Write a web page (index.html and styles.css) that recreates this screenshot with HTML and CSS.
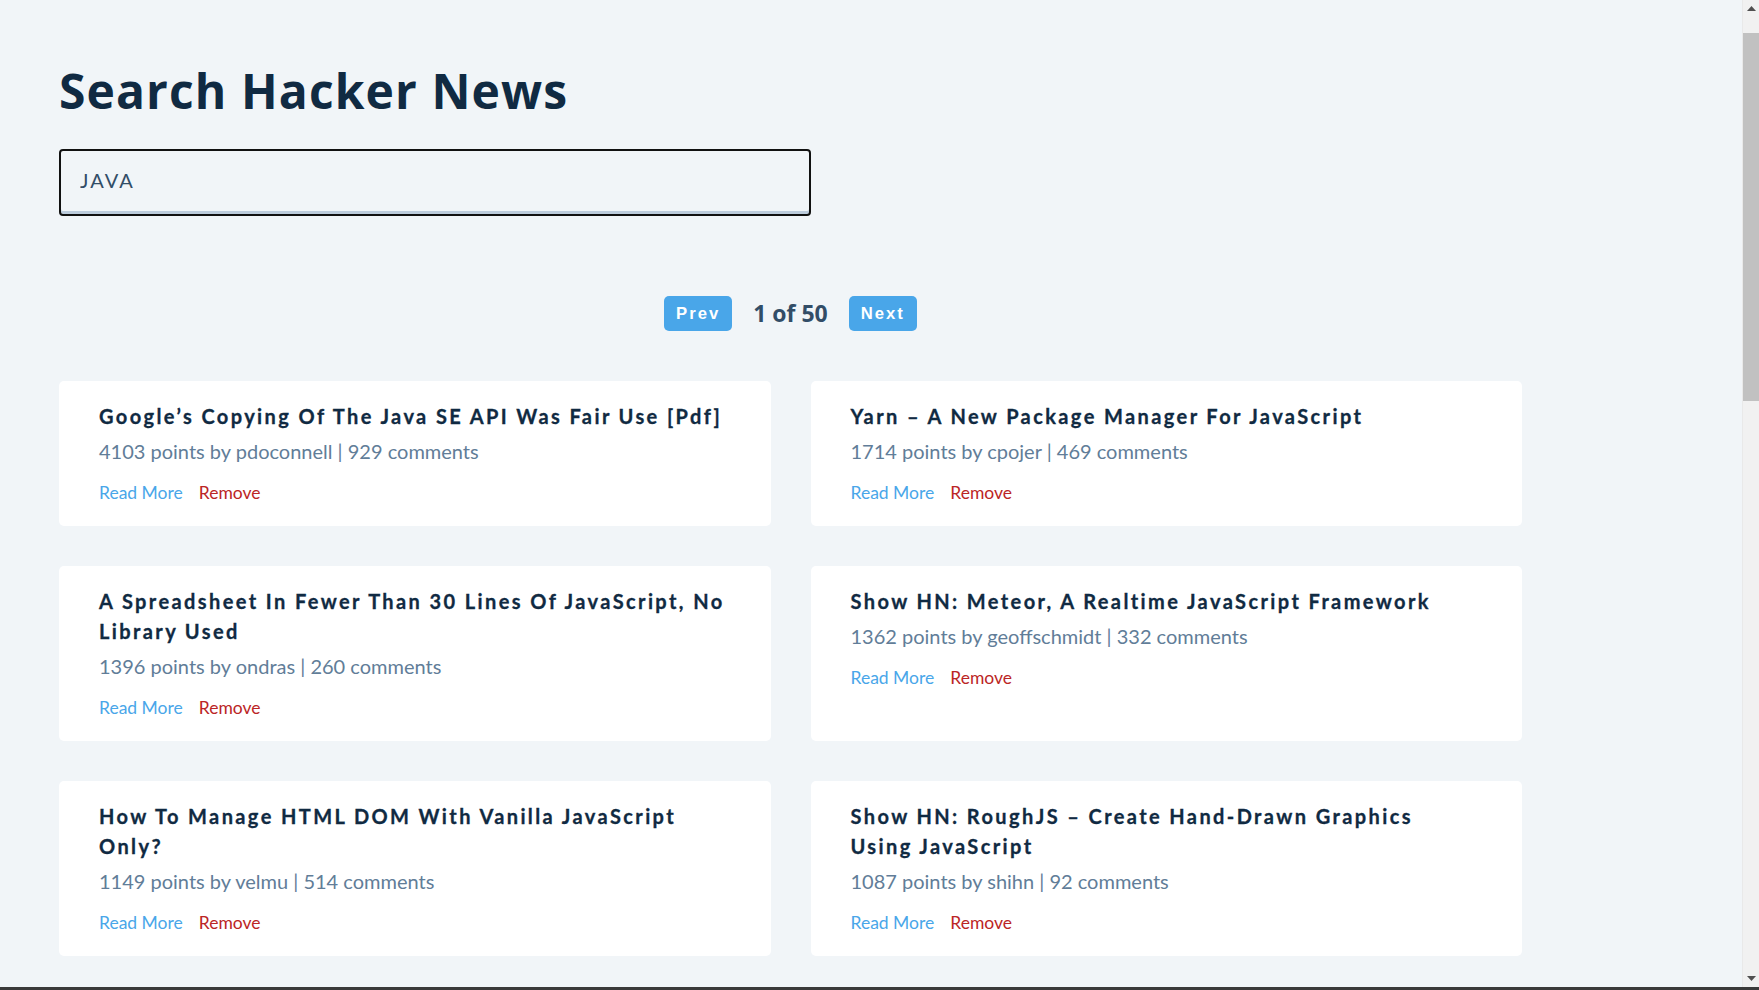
FILE: index.html
```html
<!DOCTYPE html>
<html lang="en">
<head>
<meta charset="utf-8">
<title>Search Hacker News</title>
<link rel="stylesheet" href="styles.css">
</head>
<body>
<div class="window">
<div class="viewport">
<main class="page">
  <form class="search-form">
    <h2 class="heading">Search Hacker News</h2>
    <input class="form-input" type="text" value="JAVA" autofocus>
  </form>

  <div class="btn-container">
    <button class="page-btn" type="button">Prev</button>
    <p class="page-count">1 of 50</p>
    <button class="page-btn" type="button">Next</button>
  </div>

  <section class="stories">
    <article class="story">
      <h4 class="title">Google’s Copying Of The Java SE API Was Fair Use [Pdf]</h4>
      <p class="info">4103 points by pdoconnell | 929 comments</p>
      <div class="actions"><a class="read-link" href="#">Read More</a><button class="remove-btn" type="button">Remove</button></div>
    </article>
    <article class="story">
      <h4 class="title">Yarn – A New Package Manager For JavaScript</h4>
      <p class="info">1714 points by cpojer | 469 comments</p>
      <div class="actions"><a class="read-link" href="#">Read More</a><button class="remove-btn" type="button">Remove</button></div>
    </article>
    <article class="story">
      <h4 class="title">A Spreadsheet In Fewer Than 30 Lines Of JavaScript, No Library Used</h4>
      <p class="info">1396 points by ondras | 260 comments</p>
      <div class="actions"><a class="read-link" href="#">Read More</a><button class="remove-btn" type="button">Remove</button></div>
    </article>
    <article class="story">
      <h4 class="title">Show HN: Meteor, A Realtime JavaScript Framework</h4>
      <p class="info">1362 points by geoffschmidt | 332 comments</p>
      <div class="actions"><a class="read-link" href="#">Read More</a><button class="remove-btn" type="button">Remove</button></div>
    </article>
    <article class="story">
      <h4 class="title">How To Manage HTML DOM With Vanilla JavaScript Only?</h4>
      <p class="info">1149 points by velmu | 514 comments</p>
      <div class="actions"><a class="read-link" href="#">Read More</a><button class="remove-btn" type="button">Remove</button></div>
    </article>
    <article class="story">
      <h4 class="title">Show HN: RoughJS – Create Hand-Drawn Graphics Using JavaScript</h4>
      <p class="info">1087 points by shihn | 92 comments</p>
      <div class="actions"><a class="read-link" href="#">Read More</a><button class="remove-btn" type="button">Remove</button></div>
    </article>
    <article class="story">
      <h4 class="title">The Deep Roots Of JavaScript Fatigue</h4>
      <p class="info">1052 points by ingve | 601 comments</p>
      <div class="actions"><a class="read-link" href="#">Read More</a><button class="remove-btn" type="button">Remove</button></div>
    </article>
    <article class="story">
      <h4 class="title">Java Is Still Free</h4>
      <p class="info">1011 points by tosh | 484 comments</p>
      <div class="actions"><a class="read-link" href="#">Read More</a><button class="remove-btn" type="button">Remove</button></div>
    </article>
    <article class="story">
      <h4 class="title">Show HN: A JavaScript Library For Building Interactive Maps In The Browser</h4>
      <p class="info">998 points by mbostock | 171 comments</p>
      <div class="actions"><a class="read-link" href="#">Read More</a><button class="remove-btn" type="button">Remove</button></div>
    </article>
    <article class="story">
      <h4 class="title">Oracle’s Java Lawsuit Against Google Heads To The Supreme Court</h4>
      <p class="info">976 points by danso | 530 comments</p>
      <div class="actions"><a class="read-link" href="#">Read More</a><button class="remove-btn" type="button">Remove</button></div>
    </article>
    <article class="story">
      <h4 class="title">You Might Not Need JavaScript</h4>
      <p class="info">954 points by jaxondu | 313 comments</p>
      <div class="actions"><a class="read-link" href="#">Read More</a><button class="remove-btn" type="button">Remove</button></div>
    </article>
    <article class="story">
      <h4 class="title">A Re-Introduction To JavaScript</h4>
      <p class="info">931 points by tilt | 147 comments</p>
      <div class="actions"><a class="read-link" href="#">Read More</a><button class="remove-btn" type="button">Remove</button></div>
    </article>
    <article class="story">
      <h4 class="title">JavaScript Is Eating The World, And What That Means For Developers Everywhere</h4>
      <p class="info">912 points by jashkenas | 402 comments</p>
      <div class="actions"><a class="read-link" href="#">Read More</a><button class="remove-btn" type="button">Remove</button></div>
    </article>
    <article class="story">
      <h4 class="title">Java 8 Released</h4>
      <p class="info">897 points by onderkalaci | 389 comments</p>
      <div class="actions"><a class="read-link" href="#">Read More</a><button class="remove-btn" type="button">Remove</button></div>
    </article>
    <article class="story">
      <h4 class="title">Show HN: A Tiny JavaScript Game Engine In Under 13 Kilobytes</h4>
      <p class="info">876 points by frankforce | 118 comments</p>
      <div class="actions"><a class="read-link" href="#">Read More</a><button class="remove-btn" type="button">Remove</button></div>
    </article>
    <article class="story">
      <h4 class="title">The Java Memory Model Explained For Busy Programmers</h4>
      <p class="info">859 points by signa11 | 97 comments</p>
      <div class="actions"><a class="read-link" href="#">Read More</a><button class="remove-btn" type="button">Remove</button></div>
    </article>
    <article class="story">
      <h4 class="title">Why I Still Write Plain JavaScript Without A Build Step In 2020</h4>
      <p class="info">843 points by pcr910303 | 455 comments</p>
      <div class="actions"><a class="read-link" href="#">Read More</a><button class="remove-btn" type="button">Remove</button></div>
    </article>
    <article class="story">
      <h4 class="title">Eloquent JavaScript, Third Edition</h4>
      <p class="info">827 points by marijn | 140 comments</p>
      <div class="actions"><a class="read-link" href="#">Read More</a><button class="remove-btn" type="button">Remove</button></div>
    </article>
    <article class="story">
      <h4 class="title">Java Generics FAQ</h4>
      <p class="info">812 points by dmit | 66 comments</p>
      <div class="actions"><a class="read-link" href="#">Read More</a><button class="remove-btn" type="button">Remove</button></div>
    </article>
    <article class="story">
      <h4 class="title">Show HN: I Wrote A Java Virtual Machine In JavaScript That Runs In The Browser</h4>
      <p class="info">801 points by jvilk | 211 comments</p>
      <div class="actions"><a class="read-link" href="#">Read More</a><button class="remove-btn" type="button">Remove</button></div>
    </article>
  </section>
</main>
</div>
<div class="scrollbar" aria-hidden="true">
  <div class="sb-btn">
    <svg width="9" height="5" viewBox="0 0 9 5"><path d="M0 5L4.5 0L9 5z" fill="#505050"/></svg>
  </div>
  <div class="sb-track"><div class="sb-thumb"></div></div>
  <div class="sb-btn">
    <svg width="9" height="5" viewBox="0 0 9 5"><path d="M0 0L4.5 5L9 0z" fill="#505050"/></svg>
  </div>
</div>
</div>
<div class="taskbar-edge"></div>
</body>
</html>
```

FILE: styles.css
```css
* {
  box-sizing: border-box;
  margin: 0;
  padding: 0;
}

html,
body {
  height: 100%;
  background: #f1f5f8;
}

body {
  display: flex;
  flex-direction: column;
  overflow: hidden;
  color: #102a42;
  font-family: Lato, "Open Sans", sans-serif;
}

.window {
  flex: 1;
  min-height: 0;
  display: flex;
}

.viewport {
  flex: 1;
  min-width: 0;
  overflow-y: auto;
  scrollbar-width: none;
}

.viewport::-webkit-scrollbar {
  display: none;
}

.scrollbar {
  width: 17px;
  flex: none;
  display: flex;
  flex-direction: column;
  background: #f1f1f1;
  border-left: 1px solid #e9e9e9;
}

.sb-btn {
  height: 17px;
  flex: none;
  display: flex;
  align-items: center;
  justify-content: center;
}

.sb-track {
  flex: 1;
}

.sb-thumb {
  margin-top: 16px;
  height: 368px;
  background: #c1c1c1;
}

.taskbar-edge {
  height: 3px;
  flex: none;
  background: #3a3a3a;
}

.page {
  width: 1463px;
  margin-left: 59px;
  padding-top: 66px;
  padding-bottom: 220px;
}

.heading {
  font-family: "Open Sans", Lato, sans-serif;
  font-size: 48px;
  line-height: 50px;
  font-weight: 700;
  letter-spacing: 1.1px;
  color: #102a42;
}

.form-input {
  display: block;
  margin-top: 33px;
  width: 752px;
  height: 67px;
  border: 2px solid #111;
  border-radius: 4px;
  box-shadow: inset 0 -3px 0 #bcccdc;
  background: transparent;
  padding: 0 19px 6px;
  font-family: Lato, "Open Sans", sans-serif;
  font-size: 20px;
  letter-spacing: 2px;
  color: #324d67;
  outline: none;
  caret-color: #102a42;
}

.btn-container {
  display: flex;
  justify-content: center;
  align-items: center;
  gap: 21px;
  margin-top: 80px;
  margin-bottom: 50px;
  height: 35px;
}

.page-btn {
  height: 35px;
  padding: 0 10px;
  border: 2px solid transparent;
  border-radius: 5px;
  background: #49a6e9;
  color: #fff;
  font-family: "Liberation Sans", Arial, sans-serif;
  font-size: 16.67px;
  font-weight: 700;
  letter-spacing: 2px;
  cursor: pointer;
}

.page-count {
  font-family: "Open Sans", Lato, sans-serif;
  font-size: 23px;
  font-weight: 700;
  color: #324d67;
  line-height: 35px;
}

.stories {
  display: grid;
  grid-template-columns: 1fr 1fr;
  gap: 40px;
}

.story {
  background: #fff;
  border-radius: 5px;
  padding: 20px 40px;
}

.title {
  font-size: 20px;
  line-height: 30px;
  font-weight: 700;
  letter-spacing: 2.4px;
  margin-bottom: 5px;
  color: #102a42;
  -webkit-text-stroke: 0.3px #102a42;
}

.info {
  font-size: 20px;
  line-height: 30px;
  color: #617d98;
  margin-bottom: 10px;
}

.actions {
  font-size: 17.5px;
  line-height: 30px;
  padding-top: 2px;
  margin-bottom: -2px;
}

.read-link {
  color: #49a6e9;
  text-decoration: none;
  margin-right: 16px;
}

.remove-btn {
  background: transparent;
  border: 0;
  padding: 0;
  font: inherit;
  color: #bb2525;
  cursor: pointer;
}
```
